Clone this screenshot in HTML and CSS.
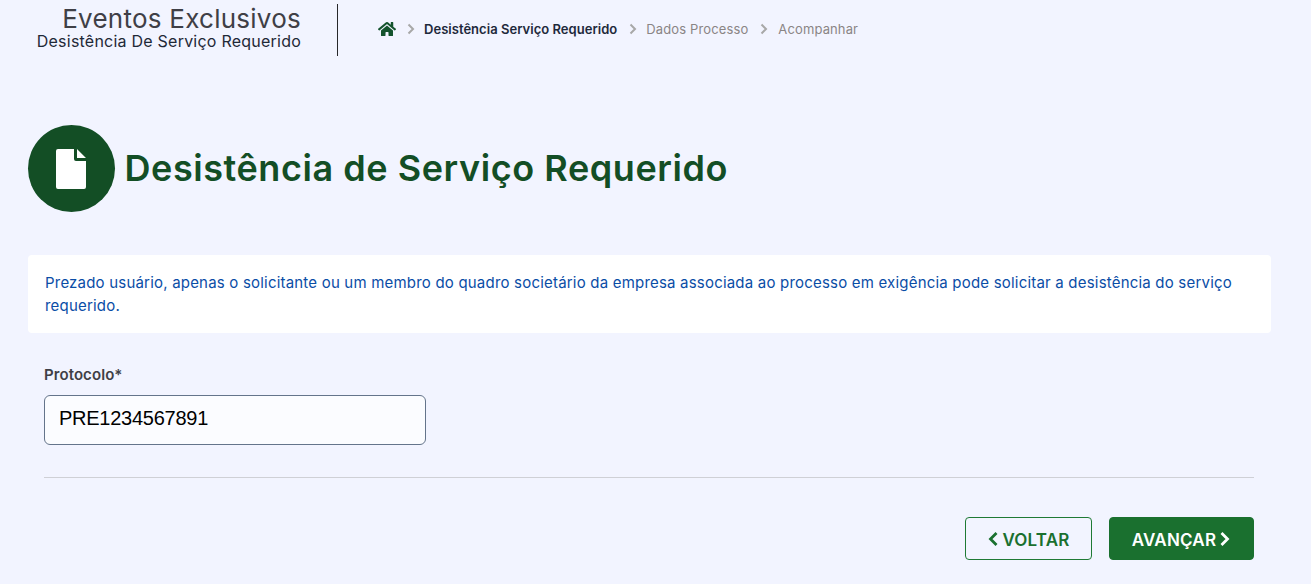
FILE: index.html
```html
<!DOCTYPE html>
<html lang="pt-BR">
<head>
<meta charset="utf-8">
<title>Desistência de Serviço Requerido</title>
<link rel="stylesheet" href="styles.css">
</head>
<body>
<header class="topbar">
  <div class="brand">
    <div class="brand-title">Eventos Exclusivos</div>
    <div class="brand-sub">Desistência De Serviço Requerido</div>
  </div>
  <nav class="crumbs">
    <svg class="home" viewBox="0 0 576 512" width="18" height="16"><path fill="#14532d" d="M280.4 148.3 96 300.1V464a16 16 0 0 0 16 16l112.100-.3a16 16 0 0 0 15.900-16V368a16 16 0 0 1 16-16h64a16 16 0 0 1 16 16v95.600a16 16 0 0 0 16 16.100L464 480a16 16 0 0 0 16-16V300L295.700 148.300a12.200 12.200 0 0 0-15.300 0zM571.600 251.500 488 182.600V44.100a12 12 0 0 0-12-12h-56a12 12 0 0 0-12 12v72.600L318.500 43a48 48 0 0 0-61 0L4.300 251.500a12 12 0 0 0-1.600 16.900l25.500 31A12 12 0 0 0 45.200 301l235.200-193.700a12.200 12.200 0 0 1 15.300 0L530.900 301a12 12 0 0 0 16.900-1.600l25.500-31a12 12 0 0 0-1.700-16.900z"/></svg>
    <svg class="sep" viewBox="0 0 10 12" width="10" height="12"><path d="M2.500 1.500 7 6l-4.500 4.500" fill="none" stroke="#a8a8a8" stroke-width="2"/></svg>
    <span class="crumb active">Desistência Serviço Requerido</span>
    <svg class="sep" viewBox="0 0 10 12" width="10" height="12"><path d="M2.500 1.500 7 6l-4.500 4.500" fill="none" stroke="#a8a8a8" stroke-width="2"/></svg>
    <span class="crumb">Dados Processo</span>
    <svg class="sep" viewBox="0 0 10 12" width="10" height="12"><path d="M2.500 1.500 7 6l-4.500 4.500" fill="none" stroke="#a8a8a8" stroke-width="2"/></svg>
    <span class="crumb">Acompanhar</span>
  </nav>
</header>
<main class="content">
  <div class="heading">
    <span class="badge">
      <svg viewBox="0 0 30 40" width="30" height="40"><path fill="#fff" d="M2 0h16v10a2 2 0 0 0 2 2h10v26a2 2 0 0 1-2 2H2a2 2 0 0 1-2-2V2a2 2 0 0 1 2-2zM21 0l9 9h-9z"/></svg>
    </span>
    <h1>Desistência de Serviço Requerido</h1>
  </div>
  <p class="notice">Prezado usuário, apenas o solicitante ou um membro do quadro societário da empresa associada ao processo em exigência pode solicitar a desistência do serviço requerido.</p>
  <form class="form">
    <label class="label" for="protocolo">Protocolo*</label>
    <input class="input" id="protocolo" type="text" value="PRE1234567891">
    <hr class="rule">
    <div class="actions">
      <button type="button" class="btn btn-outline"><svg viewBox="0 0 12 16" width="12" height="16"><path d="M9.500 2 3.500 8l6 6" fill="none" stroke="currentColor" stroke-width="2.800"/></svg><span class="btn-text">VOLTAR</span></button>
      <button type="button" class="btn btn-solid"><span class="btn-text">AVANÇAR</span><svg viewBox="0 0 12 16" width="12" height="16"><path d="M2.500 2l6 6-6 6" fill="none" stroke="currentColor" stroke-width="2.800"/></svg></button>
    </div>
  </form>
</main>
</body>
</html>
```
FILE: styles.css
```css
* { box-sizing: border-box; }
html, body { margin: 0; height: 100%; }
body {
  background: #f2f4ff;
  font-family: Inter, "Liberation Sans", sans-serif;
  color: #27272a;
  overflow: hidden;
}
.topbar {
  display: flex;
  align-items: stretch;
  margin-top: 4px;
  height: 52px;
}
.brand {
  width: 338px;
  padding-right: 36px;
  border-right: 1px solid #27272a;
  text-align: right;
}
.brand-title {
  font-size: 26px;
  line-height: 30px;
  letter-spacing: 0.25px;
  color: #3f3f46;
}
.brand-sub {
  font-size: 16px;
  line-height: 15px;
  letter-spacing: 0.23px;
  color: #1f2937;
}
.crumbs {
  display: flex;
  align-items: center;
  padding-left: 40px;
  gap: 8px;
  height: 50px;
}
.crumb {
  font-size: 13px;
  letter-spacing: 0.13px;
  color: #8a8585;
}
.crumb.active {
  font-weight: 600;
  letter-spacing: 0.03px;
  color: #1e293b;
}
.sep { margin: 0 0 0 2px; }
.crumb + .sep { margin-left: 3px; }
.crumb:last-child { margin-left: 1px; }
.content { padding: 69px 40px 0 28px; }
.heading {
  display: flex;
  align-items: center;
  gap: 9.5px;
}
.badge {
  flex: none;
  display: flex;
  align-items: center;
  justify-content: center;
  padding-right: 2px;
  width: 87px;
  height: 87px;
  border-radius: 50%;
  background: #134e25;
}
h1 {
  margin: 0 0 2px;
  font-size: 36px;
  font-weight: 600;
  letter-spacing: 0.56px;
  color: #134e25;
}
.notice {
  margin: 43px 0 0;
  padding: 16px 17px;
  background: #fff;
  border-radius: 4px;
  font-size: 15px;
  line-height: 23px;
  letter-spacing: 0.2px;
  color: #0a4da6;
}
.form { padding: 0 17px 0 16px; }
.label {
  display: block;
  margin-top: 33px;
  font-size: 15px;
  line-height: 18px;
  letter-spacing: 0.08px;
  font-weight: 600;
  color: #3f3f46;
}
.input {
  display: block;
  width: 382px;
  height: 50px;
  margin-top: 11px;
  padding: 0 14px 4px;
  border: 1px solid #64748b;
  border-radius: 6px;
  background: #fbfcff;
  font-family: "Liberation Sans", Arial, sans-serif;
  font-size: 20px;
  letter-spacing: -0.25px;
  color: #000;
}
.rule {
  margin: 32px 0 0;
  border: 0;
  border-top: 1px solid #cfd0d6;
}
.actions {
  display: flex;
  justify-content: flex-end;
  gap: 17px;
  margin-top: 39px;
}
.btn {
  display: flex;
  align-items: center;
  justify-content: center;
  gap: 3px;
  height: 43px;
  border-radius: 4px;
  font-family: Inter, "Liberation Sans", sans-serif;
  font-size: 17px;
  font-weight: 600;
}
.btn-text {
  position: relative;
  top: 1px;
  letter-spacing: 0.2px;
}
.btn-outline {
  width: 127px;
  background: transparent;
  border: 1px solid #1f7a35;
  color: #1a702f;
}
.btn-solid {
  width: 145px;
  background: #1a702f;
  border: 1px solid #1a702f;
  color: #fff;
}
```
